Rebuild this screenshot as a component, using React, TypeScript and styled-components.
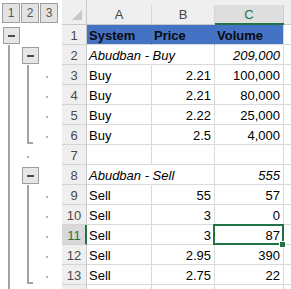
import React from 'react';
import styled, { createGlobalStyle, css } from 'styled-components';

const GREEN = '#217346';
const GRID = '#dadada';
const HEAD_BG = '#efefef';
const HEAD_LINE = '#c9c9c9';
const OUTLINE = '#a3a3a3';

const GlobalStyle = createGlobalStyle`
    html, body {
        margin: 0;
        padding: 0;
        background: #ffffff;
    }
    body {
        font-family: "Liberation Sans", Arial, sans-serif;
        font-size: 13px;
        color: #000;
        overflow: hidden;
    }
`;

const COLS = '62px 25px 65px 63px 69px 1fr';

const Sheet = styled.div`
    display: flex;
    flex-direction: column;
    width: 291px;
    height: 289px;
    overflow: hidden;
`;

const HeaderRow = styled.div`
    display: grid;
    grid-template-columns: ${COLS};
    height: 25px;
    flex: none;
`;

const LevelBar = styled.div`
    display: flex;
    gap: 1px;
    padding: 3px 0 0 2px;
    background: #fff;
`;

const LevelButton = styled.div`
    width: 16px;
    height: 18px;
    border: 1px solid #9f9f9f;
    background: #e3e3e3;
    color: #555;
    font-size: 12px;
    display: flex;
    align-items: center;
    justify-content: center;
`;

const Corner = styled.div`
    position: relative;
    background: ${HEAD_BG};
    border-right: 1px solid ${HEAD_LINE};
    border-bottom: 1px solid ${HEAD_LINE};

    &::after {
        content: '';
        position: absolute;
        right: 4px;
        bottom: 4px;
        width: 0;
        height: 0;
        border-left: 10px solid transparent;
        border-bottom: 10px solid #c8c8c8;
    }
`;

const ColHeader = styled.div<{ $selected?: boolean; $last?: boolean }>`
    display: flex;
    align-items: flex-end;
    background: ${HEAD_BG};
    border-bottom: 1px solid ${HEAD_LINE};
    padding-top: 5px;

    span {
        flex: 1;
        height: 19px;
        display: flex;
        align-items: center;
        justify-content: center;
        color: #444;
        border-right: 1px solid ${p => (p.$last ? 'transparent' : '#d6d6d6')};
        box-sizing: border-box;
    }

    ${p => p.$selected && css`
        border-bottom: 2px solid ${GREEN};
        span {
            background: #dedede;
            color: ${GREEN};
            height: 18px;
            border-right-color: #cdcdcd;
        }
    `}
`;

const Row = styled.div`
    display: grid;
    grid-template-columns: ${COLS};
    height: 20px;
    flex: none;
`;

const OutlineCell = styled.div`
    display: grid;
    grid-template-columns: repeat(3, 19px);
    padding-left: 2px;
    background: #fff;
`;

const Slot = styled.div`
    position: relative;
    height: 20px;
`;

const Collapse = styled.div`
    margin: 2px 0 0 1px;
    width: 15px;
    height: 15px;
    border: 1px solid #9d9d9d;
    background: #e6e6e6;
    display: flex;
    align-items: center;
    justify-content: center;

    &::before {
        content: '';
        width: 7px;
        height: 2px;
        background: #4a4a4a;
    }
`;

const Guide = styled.div<{ $end?: boolean }>`
    margin-left: 6px;
    width: 2px;
    height: ${p => (p.$end ? '19px' : '20px')};
    background: ${OUTLINE};
    position: relative;

    ${p => p.$end && css`
        &::after {
            content: '';
            position: absolute;
            left: 0;
            bottom: 0;
            width: 6px;
            height: 2px;
            background: ${OUTLINE};
        }
    `}
`;

const Dot = styled.div`
    margin: 11px 0 0 6px;
    width: 2px;
    height: 2px;
    background: #b4b4b4;
`;

const RowHeader = styled.div<{ $selected?: boolean }>`
    display: flex;
    align-items: flex-end;
    justify-content: center;
    background: ${p => (p.$selected ? '#d8d8d8' : HEAD_BG)};
    color: ${p => (p.$selected ? GREEN : '#4a4a4a')};
    border-bottom: 1px solid #d4d4d4;
    border-right: ${p => (p.$selected ? `2px solid ${GREEN}` : `1px solid ${HEAD_LINE}`)};
    line-height: 16px;
    padding-left: ${p => (p.$selected ? '1px' : '0')};
`;

const Cell = styled.div<{
    $align?: 'left' | 'right';
    $italic?: boolean;
    $head?: boolean;
    $selected?: boolean;
    $spill?: boolean;
}>`
    position: relative;
    display: flex;
    align-items: flex-end;
    justify-content: ${p => (p.$align === 'right' ? 'flex-end' : 'flex-start')};
    padding: 0 3px 0 2px;
    line-height: 16px;
    white-space: nowrap;
    border-right: 1px solid ${p => (p.$spill ? 'transparent' : GRID)};
    border-bottom: 1px solid ${GRID};
    font-style: ${p => (p.$italic ? 'italic' : 'normal')};

    ${p => p.$head && css`
        background: #4472c4;
        font-weight: bold;
        color: #0a0a0a;
        border-right-color: #4472c4;
    `}

    ${p => p.$selected && css`
        &::after {
            content: '';
            position: absolute;
            left: -2px;
            top: -1px;
            right: -1px;
            bottom: -1px;
            border: 2px solid ${GREEN};
        }
        &::before {
            content: '';
            position: absolute;
            right: -3px;
            bottom: -4px;
            width: 5px;
            height: 5px;
            background: ${GREEN};
            border: 1px solid #fff;
            z-index: 2;
        }
    `}
`;

const LastHead = styled(Cell)`
    border-right-color: ${GRID};
`;

const Spare = styled.div`
    border-bottom: 1px solid ${GRID};
`;

type Mark = '' | 'minus' | 'line' | 'end' | 'dot';

type RowData = {
    n: number;
    outline: [Mark, Mark, Mark];
    a?: string;
    b?: string;
    c?: string;
    head?: boolean;
    italic?: boolean;
};

const rows: RowData[] = [
    { n: 1, outline: ['minus', '', ''], a: 'System', b: 'Price', c: 'Volume', head: true },
    { n: 2, outline: ['line', 'minus', ''], a: 'Abudban - Buy', c: '209,000', italic: true },
    { n: 3, outline: ['line', 'line', 'dot'], a: 'Buy', b: '2.21', c: '100,000' },
    { n: 4, outline: ['line', 'line', 'dot'], a: 'Buy', b: '2.21', c: '80,000' },
    { n: 5, outline: ['line', 'line', 'dot'], a: 'Buy', b: '2.22', c: '25,000' },
    { n: 6, outline: ['line', 'end', 'dot'], a: 'Buy', b: '2.5', c: '4,000' },
    { n: 7, outline: ['line', 'dot', ''] },
    { n: 8, outline: ['line', 'minus', ''], a: 'Abudban - Sell', c: '555', italic: true },
    { n: 9, outline: ['line', 'line', 'dot'], a: 'Sell', b: '55', c: '57' },
    { n: 10, outline: ['line', 'line', 'dot'], a: 'Sell', b: '3', c: '0' },
    { n: 11, outline: ['line', 'line', 'dot'], a: 'Sell', b: '3', c: '87' },
    { n: 12, outline: ['line', 'line', 'dot'], a: 'Sell', b: '2.95', c: '390' },
    { n: 13, outline: ['line', 'end', 'dot'], a: 'Sell', b: '2.75', c: '22' },
];

const SELECTED_ROW = 11;

function OutlineMark({ mark }: { mark: Mark }) {
    if (mark === 'minus') return <Collapse />;
    if (mark === 'line') return <Guide />;
    if (mark === 'end') return <Guide $end />;
    if (mark === 'dot') return <Dot />;
    return null;
}

export default function App() {
    return (
        <>
            <GlobalStyle />
            <Sheet>
                <HeaderRow>
                    <LevelBar>
                        <LevelButton>1</LevelButton>
                        <LevelButton>2</LevelButton>
                        <LevelButton>3</LevelButton>
                    </LevelBar>
                    <Corner />
                    <ColHeader><span>A</span></ColHeader>
                    <ColHeader><span>B</span></ColHeader>
                    <ColHeader $selected><span>C</span></ColHeader>
                    <ColHeader $last><span /></ColHeader>
                </HeaderRow>
                {rows.map(r => (
                    <Row key={r.n}>
                        <OutlineCell>
                            {r.outline.map((m, i) => (
                                <Slot key={i}>
                                    <OutlineMark mark={m} />
                                </Slot>
                            ))}
                        </OutlineCell>
                        <RowHeader $selected={r.n === SELECTED_ROW}>{r.n}</RowHeader>
                        <Cell $head={r.head} $italic={r.italic} $spill={r.italic}>{r.a}</Cell>
                        <Cell $head={r.head} $align={r.head ? 'left' : 'right'}>{r.b}</Cell>
                        {r.head ? (
                            <LastHead $head>{r.c}</LastHead>
                        ) : (
                            <Cell $align="right" $italic={r.italic} $selected={r.n === SELECTED_ROW}>
                                {r.c}
                            </Cell>
                        )}
                        <Spare />
                    </Row>
                ))}
                {/* row 14 only peeks in at the bottom edge */}
                <Row>
                    <OutlineCell>
                        <Slot><Guide /></Slot>
                    </OutlineCell>
                    <RowHeader />
                    <Cell />
                    <Cell />
                    <Cell />
                    <Spare />
                </Row>
            </Sheet>
        </>
    );
}
